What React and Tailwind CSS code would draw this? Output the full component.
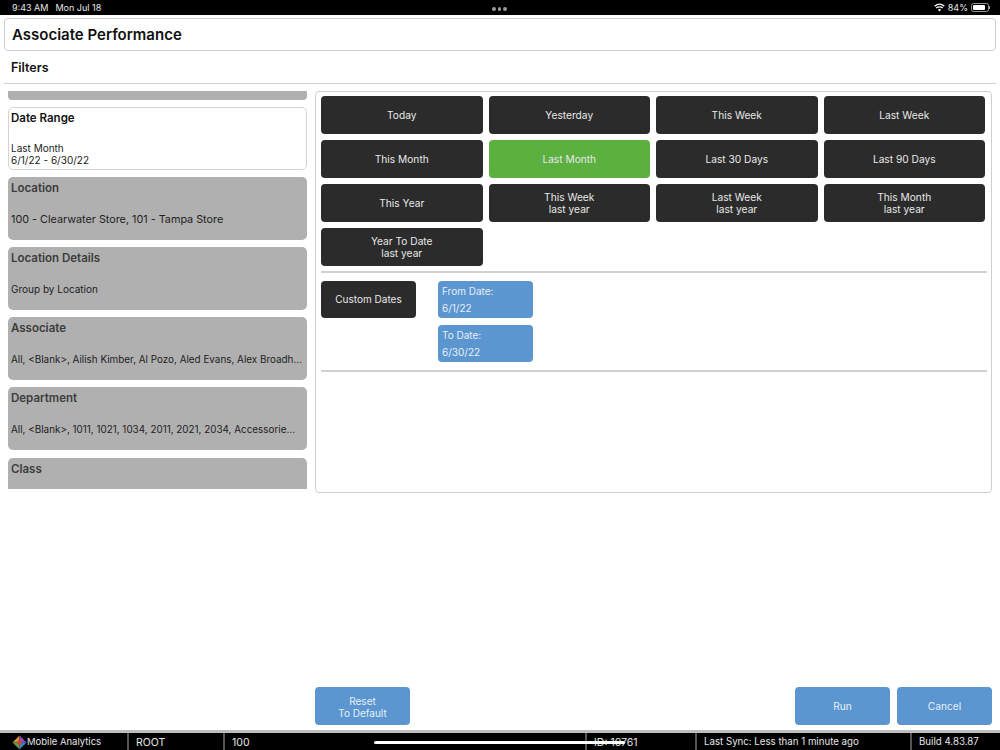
const F = { fontFamily: 'Inter, "Liberation Sans", sans-serif' };

function DarkBtn({ children, active }) {
  return (
    <div className={`h-[38px] rounded-[4px] flex items-center justify-center text-center text-[10.2px] leading-[12px] text-[#e8e8e8] ${active ? 'bg-[#5bb040]' : 'bg-[#2b2b2b]'}`}>
      <div>{children}</div>
    </div>
  );
}

function Card({ title, children, active, className = '' }) {
  return (
    <div className={`h-[63px] shrink-0 rounded-[5px] relative ${active ? 'bg-white border-[1.5px] border-[#d4d4d4] px-[2px] pt-[3px]' : 'bg-[#b0b0b0] px-[3px] pt-[4px]'} ${className}`}>
      <div className={`text-[11.5px] leading-[14px] font-semibold ${active ? 'text-[#111]' : 'text-[#3c3c3c]'}`}>{title}</div>
      {children}
    </div>
  );
}

function Cell({ w, children, className = '' }) {
  return (
    <div className={`h-full flex items-center border-r-2 border-[#555] shrink-0 whitespace-nowrap pt-[2px] ${w} ${className}`}>
      {children}
    </div>
  );
}

const grid = [
  ['Today'], ['Yesterday'], ['This Week'], ['Last Week'],
  ['This Month'], ['Last Month', null, true], ['Last 30 Days'], ['Last 90 Days'],
  ['This Year'], ['This Week', 'last year'], ['Last Week', 'last year'], ['This Month', 'last year'],
  ['Year To Date', 'last year'],
];

export default function App() {
  return (
    <div style={F} className="w-[1000px] h-[750px] bg-white flex flex-col overflow-hidden relative">
      {/* status bar */}
      <div className="h-[15px] bg-black text-[#e8e8e8] text-[9px] flex items-center justify-between pl-[12px] pr-[10px] shrink-0 relative">
        <div className="flex gap-[7px]"><span>9:43 AM</span><span>Mon Jul 18</span></div>
        <div className="absolute left-[492px] top-[7px] flex gap-[2px]">
          <span className="w-[3.5px] h-[3.5px] rounded-full bg-[#999]" />
          <span className="w-[3.5px] h-[3.5px] rounded-full bg-[#999]" />
          <span className="w-[3.5px] h-[3.5px] rounded-full bg-[#999]" />
        </div>
        <div className="flex items-center gap-[3px]">
          <svg width="11" height="9" viewBox="0 0 11 9" fill="none" stroke="#fff" strokeWidth="1.3">
            <path d="M0.7 3.2C3.5 0.6 7.5 0.6 10.3 3.2" />
            <path d="M2.3 5C4 3.4 7 3.4 8.7 5" />
            <path d="M5.5 8.5L3.9 6.7C4.8 5.9 6.2 5.9 7.1 6.7Z" fill="#fff" stroke="none" />
          </svg>
          <span>84%</span>
          <div className="flex items-center">
            <div className="w-[18px] h-[9px] border border-[#999] rounded-[2.5px] p-[1px]">
              <div className="h-full w-[84%] bg-white rounded-[1px]" />
            </div>
            <div className="w-[1px] h-[3px] bg-[#999]" />
          </div>
        </div>
      </div>

      {/* title */}
      <div className="mt-[3px] mx-[4px] h-[33px] border border-[#cfcfcf] rounded-[4px] flex items-center pl-[7px] pt-[2px] text-[15px] font-semibold text-[#111] shrink-0">
        Associate Performance
      </div>

      {/* filters heading */}
      <div className="mx-[4px] h-[33px] pl-[7px] pt-[2px] flex items-center text-[12.5px] font-semibold text-[#111] border-b border-[#cfcfcf] shrink-0">
        Filters
      </div>

      {/* body */}
      <div className="flex-1 flex pl-[8px] pr-[8px] pt-[7px] min-h-0">
        <div className="w-[299px] h-[398px] overflow-hidden flex flex-col gap-[7px] shrink-0">
          <div className="h-[9px] bg-[#b0b0b0] rounded-b-[4px] shrink-0" />
          <Card title="Date Range" active>
            <div className="text-[10px] leading-[12px] text-[#222] mt-[17px]">Last Month<br />6/1/22 - 6/30/22</div>
          </Card>
          <Card title="Location">
            <div className="text-[10.8px] leading-[12px] text-[#222] mt-[19px] whitespace-nowrap">100 - Clearwater Store, 101 - Tampa Store</div>
          </Card>
          <Card title="Location Details">
            <div className="text-[10px] leading-[12px] text-[#222] mt-[18px]">Group by Location</div>
          </Card>
          <Card title="Associate">
            <div className="text-[9.9px] leading-[12px] text-[#222] mt-[18px] whitespace-nowrap">{'All, <Blank>, Ailish Kimber, Al Pozo, Aled Evans, Alex Broadh...'}</div>
          </Card>
          <Card title="Department">
            <div className="text-[9.9px] leading-[12px] text-[#222] mt-[18px] whitespace-nowrap">{'All, <Blank>, 1011, 1021, 1034, 2011, 2021, 2034, Accessorie...'}</div>
          </Card>
          <Card title="Class" className="mt-[1px]" />
        </div>

        <div className="ml-[8px] w-[677px] h-[402px] border border-[#cfcfcf] rounded-[4px] px-[5px] pt-[4px] shrink-0">
          <div className="grid grid-cols-4 gap-[6px] w-[664px]">
            {grid.map(([a, b, active], i) => (
              <DarkBtn key={i} active={active}>{a}{b && <><br />{b}</>}</DarkBtn>
            ))}
          </div>
          <div className="h-[2px] bg-[#d0d0d0] mt-[5px] w-[666px]" />
          <div className="flex gap-[22px] mt-[8px]">
            <div className="w-[95px] h-[37px] bg-[#2b2b2b] rounded-[4px] flex items-center justify-center text-[10px] text-[#e8e8e8]">Custom Dates</div>
            <div className="flex flex-col gap-[7px]">
              <div className="w-[95px] h-[37px] bg-[#5b96d0] rounded-[4px] pl-[4px] pt-[2px] text-[10px] leading-[17px] text-[#e6eff8]">From Date:<br />6/1/22</div>
              <div className="w-[95px] h-[37px] bg-[#5b96d0] rounded-[4px] pl-[4px] pt-[2px] text-[10px] leading-[17px] text-[#e6eff8]">To Date:<br />6/30/22</div>
            </div>
          </div>
          <div className="h-[2px] bg-[#d0d0d0] mt-[8px] w-[666px]" />
        </div>
      </div>

      {/* bottom buttons */}
      <div className="flex pl-[315px] pr-[8px] mb-[5px] shrink-0">
        <div className="w-[95px] h-[38px] bg-[#5b96d0] rounded-[4px] pt-[2px] flex items-center justify-center text-center text-[10px] leading-[12px] text-[#e6eff8]">Reset<br />To Default</div>
        <div className="ml-auto flex gap-[7px]">
          <div className="w-[95px] h-[38px] bg-[#5b96d0] rounded-[4px] pt-[2px] flex items-center justify-center text-[10.2px] text-[#e6eff8]">Run</div>
          <div className="w-[95px] h-[38px] bg-[#5b96d0] rounded-[4px] pt-[2px] flex items-center justify-center text-[10.2px] text-[#e6eff8]">Cancel</div>
        </div>
      </div>

      {/* status footer */}
      <div className="h-[20px] shrink-0 bg-black border-t-[3px] border-[#bdbdbd] flex items-center text-[9.7px] text-[#e6e6e6]">
        <Cell w="w-[129px]" className="pl-[12px] text-[9.5px]">
          <svg width="15" height="15" viewBox="0 0 15 15" className="shrink-0">
            <path d="M7.5 0.5L7.5 7.5L0.5 7.5Z" fill="#d9922e" />
            <path d="M7.5 0.5L14.5 7.5L7.5 7.5Z" fill="#8a4fb0" />
            <path d="M14.5 7.5L7.5 14.5L7.5 7.5Z" fill="#3f7fc8" />
            <path d="M0.5 7.5L7.5 14.5L7.5 7.5Z" fill="#5a9e48" />
            <path d="M7.5 4.5L10.5 7.5L7.5 10.5L4.5 7.5Z" fill="#c8443c" />
          </svg>
          <span className="whitespace-nowrap">Mobile Analytics</span>
        </Cell>
        <Cell w="w-[96px]" className="pl-[7px] text-[10.5px]">ROOT</Cell>
        <Cell w="w-[362px]" className="pl-[7px] text-[10.5px]">100</Cell>
        <Cell w="w-[110px]" className="pl-[7px] text-[10.5px]">ID: 10761</Cell>
        <Cell w="w-[215px]" className="pl-[7px]">Last Sync: Less than 1 minute ago</Cell>
        <div className="pl-[7px] pt-[2px] whitespace-nowrap">Build 4.83.87</div>
      </div>
      <div className="absolute left-[374px] top-[741px] w-[251px] h-[3px] rounded-full bg-white" />
    </div>
  );
}
